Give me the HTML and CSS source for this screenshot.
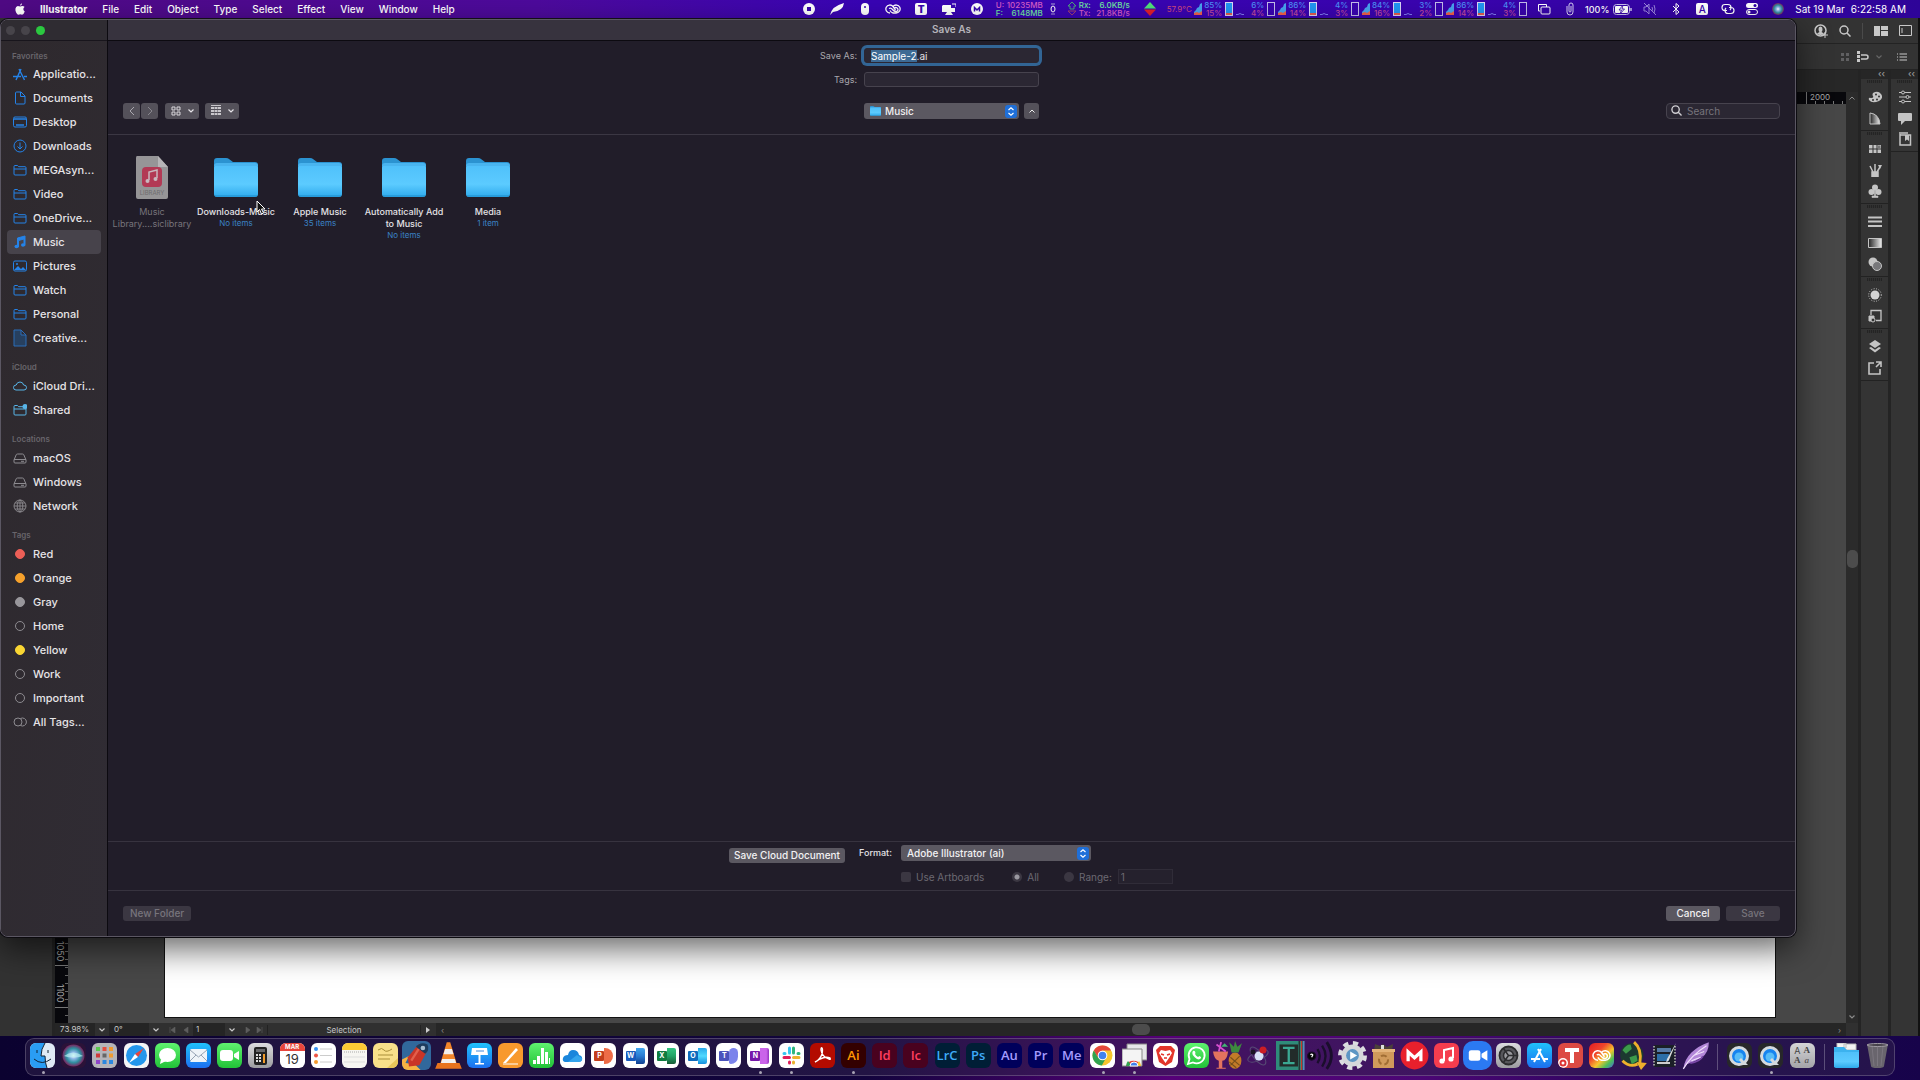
FILE: index.html
```html
<!DOCTYPE html>
<html lang="en">
<head>
    <meta charset="UTF-8">
    <meta name="viewport" content="width=device-width, initial-scale=1.0">
    <title>Save As</title>
    <link rel="stylesheet" href="styles.css">
</head>
<body>
    <!-- Shared icons -->
    <svg class="sprite" aria-hidden="true">
        <linearGradient id="folderBlue" x1="0" y1="0" x2="0" y2="1">
            <stop offset="0" stop-color="#4fc0fa"/><stop offset=".6" stop-color="#5ccbff"/><stop offset="1" stop-color="#2eaaec"/>
        </linearGradient>
        <linearGradient id="fadeGray"><stop offset="0" stop-color="#222"/><stop offset="1" stop-color="#eee"/></linearGradient>
        <linearGradient id="skyBlue" x1="0" y1="0" x2="0" y2="1"><stop offset="0" stop-color="#1fc2fb"/><stop offset="1" stop-color="#1c6ff0"/></linearGradient>
        <linearGradient id="green" x1="0" y1="0" x2="0" y2="1"><stop offset="0" stop-color="#5ff26f"/><stop offset="1" stop-color="#22c238"/></linearGradient>
        <linearGradient id="silver" x1="0" y1="0" x2="0" y2="1"><stop offset="0" stop-color="#dcdcde"/><stop offset="1" stop-color="#9c9ca0"/></linearGradient>
        <linearGradient id="rainbow" x1="0" y1="0" x2="1" y2="1"><stop offset="0" stop-color="#e31b23"/><stop offset=".35" stop-color="#f0452c"/><stop offset=".6" stop-color="#f6c52e"/><stop offset=".8" stop-color="#4abf5a"/><stop offset="1" stop-color="#4b62e0"/></linearGradient>
        <radialGradient id="siri"><stop offset="0" stop-color="#fff"/><stop offset=".3" stop-color="#8fb7e8"/><stop offset=".65" stop-color="#2f8f9f"/><stop offset="1" stop-color="#7a2560"/></radialGradient>
        <symbol id="folder" viewBox="0 0 44 40">
            <path d="M0 6V3q0-3 3-3h9q2 0 3 1l4 3h22q3 0 3 3v4H0z" fill="#2b93d1"/>
            <rect y="7" width="44" height="32" rx="3" fill="url(#folderBlue)"/>
            <path d="M0 8q0-3 3-3h38q3 0 3 3" fill="#49b4ef"/>
            <path d="M1 38h42" stroke="#1f8cc9"/>
        </symbol>
        <symbol id="side-folder" viewBox="0 0 14 14">
            <path d="M1 11V3.500Q1 2.500 2 2.500h2.500l1.200 1.200H12q1 0 1 1V11q0 1-1 1H2q-1 0-1-1zM1 6h12" fill="none" stroke="currentColor"/>
        </symbol>
        <symbol id="drive" viewBox="0 0 14 14">
            <path d="M1 9l2.200-5.200Q3.500 3 4.500 3h5q1 0 1.300.8L13 9v2q0 1-1 1H2q-1 0-1-1zM1 8.500h12M8 10.300h3" fill="none" stroke="currentColor"/>
        </symbol>
        <symbol id="stepper" viewBox="0 0 12 13">
            <rect width="12" height="13" rx="3" fill="#1f6fd8"/>
            <path d="M3.500 5L6 2.800 8.500 5M3.500 8L6 10.200 8.500 8" fill="none" stroke="#fff" stroke-width="1.200"/>
        </symbol>
        <symbol id="chevron" viewBox="0 0 6 4"><path d="M.5.5L3 3 5.500.5" fill="none" stroke="currentColor" stroke-width="1.200"/></symbol>
        <symbol id="magnifier" viewBox="0 0 12 12"><path d="M8 8l3.500 3.500M9 5A4 4 0 1 1 1 5a4 4 0 0 1 8 0z" fill="none" stroke="currentColor" stroke-width="1.500"/></symbol>
        <symbol id="cpu-graph" viewBox="0 0 8 12"><path d="M0 12V9l2-2 1-2 2-1 1-3 2-1v12z" fill="#48a3ef"/><path d="M0 12v-2l3-1 2 1 3-2v4z" fill="#f0614b"/></symbol>
        <symbol id="cpu-idle" viewBox="0 0 8 12"><path d="M0 11.500h2l2-1 2 1h2" stroke="#7f7cf0" fill="none"/></symbol>
        <symbol id="bar-full" viewBox="0 0 8 14"><rect x=".5" y=".5" width="7" height="13" fill="#2196f3" stroke="#d9d4f5"/><path d="M1 12h6" stroke="#e45b4e" stroke-width="2"/></symbol>
        <symbol id="bar-empty" viewBox="0 0 8 14"><rect x=".5" y=".5" width="7" height="13" fill="none" stroke="#c3bce8"/></symbol>
        <symbol id="quicktime" viewBox="0 0 25 25">
            <rect width="25" height="25" fill="#27272a"/>
            <circle cx="12" cy="13" r="8.500" fill="#1784ef" stroke="#d5dade" stroke-width="3"/>
            <circle cx="12" cy="14" r="4.500" fill="#58bdf8"/>
            <path d="M14 15l7 7h-5l-4-5z" fill="#d5dade"/>
        </symbol>
        <symbol id="cc" viewBox="0 0 16 12"><path d="M5 10a4 4 0 1 1 3-6.500l2.500 3.500M8 3.500A4 4 0 1 1 11 10H8Q6 9.500 5 7.500M4 5.500q2-1 3.500 1T11 8.500a2 2 0 1 0-1.500-3.400" fill="none" stroke="currentColor" stroke-width="1.300"/></symbol>
    </svg>

    <!-- Menu bar -->
    <header class="menubar">
        <nav class="menus">
            <svg class="apple" viewBox="0 0 12 14"><path d="M8.400 0q.1 2.500-2.300 3Q6 .7 8.400 0zM6.300 4q1.900-1.100 3.900-.3.800.4 1.200 1-1.500 1-1.400 2.700.1 1.800 1.700 2.600Q10.300 14 8.500 14q-1.200-.6-2.200-.6T4.100 14Q2.700 14 1.500 11.500.2 9 .5 6.700.9 4 3.300 3.400q1.400 0 3 .6z" fill="#fff"/></svg>
            <a href="#" class="app-name">Illustrator</a>
            <a href="#">File</a>
            <a href="#">Edit</a>
            <a href="#">Object</a>
            <a href="#">Type</a>
            <a href="#">Select</a>
            <a href="#">Effect</a>
            <a href="#">View</a>
            <a href="#">Window</a>
            <a href="#">Help</a>
        </nav>
        <div class="status">
            <span class="item"><svg width="12" height="12"><circle cx="6" cy="6" r="6" fill="#fff"/><rect x="4" y="4" width="4" height="4" fill="#3a06b0"/></svg></span>
            <span class="item"><svg width="14" height="12"><path d="M0 12Q2 3 14 0q-1 8-11 9z" fill="#fff"/></svg></span>
            <span class="item"><svg width="8" height="12"><rect width="8" height="12" rx="4" fill="#fff"/><path d="M4 3v2" stroke="#3a06b0" stroke-width="1.500"/></svg></span>
            <span class="item"><svg width="16" height="12"><use href="#cc"/></svg></span>
            <span class="item"><b class="letter-badge">T</b></span>
            <span class="item"><svg width="14" height="12"><path d="M1 2h8v3h4v4H9l2 3H3l2-3H0V3z" fill="#fff"/><path d="M10 1h4v3" stroke="#fff" fill="none"/></svg></span>
            <span class="item"><svg width="12" height="12"><circle cx="6" cy="6" r="6" fill="#fff"/><path d="M3.500 8.500v-4L6 7l2.500-2.500v4" fill="none" stroke="#3a06b0" stroke-width="1.500"/></svg></span>
            <span class="item memory">
                <span class="meter pink"><span>U:</span><span>10235MB</span></span>
                <span class="meter lime"><span>F:</span><span>6148MB</span></span>
                <svg class="memory-mark" width="6" height="14"><path d="M1 2h4M1 12h4" stroke="#aaa1d8"/><ellipse cx="3" cy="7" rx="2" ry="3" fill="none" stroke="#fff"/></svg>
            </span>
            <span class="item network">
                <svg class="globe" width="10" height="14"><path d="M5 0l4 4H7v3H3V4H1z" fill="none" stroke="#4aa67a"/><path d="M5 13L1 9h8z" fill="none" stroke="#9d3f70"/></svg>
                <span class="meter lime"><span>Rx:</span><span>6.0KB/s</span></span>
                <span class="meter pink"><span>Tx:</span><span>21.8KB/s</span></span>
            </span>
            <span class="item"><svg width="12" height="14"><path d="M0 6.500L6 0l6 6.500z" fill="#4fe07a"/><path d="M0 7.500h12L6 14z" fill="#e01f2e"/></svg></span>
            <span class="item temp">57.9°C</span>
            <span class="cpu"><svg width="8" height="12"><use href="#cpu-graph"/></svg><span class="load"><span>85%</span><span>15%</span></span><svg width="8" height="14"><use href="#bar-full"/></svg></span>
            <span class="cpu"><svg width="8" height="12"><use href="#cpu-idle"/></svg><span class="load"><span>6%</span><span>4%</span></span><svg width="8" height="14"><use href="#bar-empty"/></svg></span>
            <span class="cpu"><svg width="8" height="12"><use href="#cpu-graph"/></svg><span class="load"><span>86%</span><span>14%</span></span><svg width="8" height="14"><use href="#bar-full"/></svg></span>
            <span class="cpu"><svg width="8" height="12"><use href="#cpu-idle"/></svg><span class="load"><span>4%</span><span>3%</span></span><svg width="8" height="14"><use href="#bar-empty"/></svg></span>
            <span class="cpu"><svg width="8" height="12"><use href="#cpu-graph"/></svg><span class="load"><span>84%</span><span>16%</span></span><svg width="8" height="14"><use href="#bar-full"/></svg></span>
            <span class="cpu"><svg width="8" height="12"><use href="#cpu-idle"/></svg><span class="load"><span>3%</span><span>2%</span></span><svg width="8" height="14"><use href="#bar-empty"/></svg></span>
            <span class="cpu"><svg width="8" height="12"><use href="#cpu-graph"/></svg><span class="load"><span>86%</span><span>14%</span></span><svg width="8" height="14"><use href="#bar-full"/></svg></span>
            <span class="cpu"><svg width="8" height="12"><use href="#cpu-idle"/></svg><span class="load"><span>4%</span><span>3%</span></span><svg width="8" height="14"><use href="#bar-empty"/></svg></span>
            <span class="item"><svg width="14" height="12" fill="none" stroke="#fff"><path d="M3 8H1.500V1.500h8V4"/><rect x="4" y="4" width="9" height="7" rx="1"/></svg></span>
            <span class="item narrow"><svg width="8" height="14" fill="none" stroke="#d8d0f5"><path d="M1 4v6q0 3 3 3t3-3V3q0-2-2-2T3 3v6q0 1 1 1t1-1V4"/></svg></span>
            <span class="item battery">100%
                <svg width="20" height="11"><rect x=".5" y=".5" width="16" height="10" rx="3" fill="none" stroke="#c9bfee"/><rect x="2" y="2" width="13" height="7" rx="1" fill="#fff"/><path d="M10 1L6 6h2.500L7 10l4.500-5H9z" fill="#fff" stroke="#3000a8" stroke-width=".8"/><path d="M18 4v3" stroke="#c9bfee" stroke-width="1.500"/></svg>
            </span>
            <span class="item"><svg width="14" height="12" fill="none" stroke="#9a84dc"><path d="M1 4h2l3-3v10L3 8H1zM9 4q1 2 0 4M11 2q2 4 0 8M1 0l12 12"/></svg></span>
            <span class="item narrow"><svg width="8" height="12" fill="none" stroke="#fff"><path d="M1 3l6 6-3 2.500v-11L7 3 1 9"/></svg></span>
            <span class="item"><b class="letter-badge thin">A</b></span>
            <span class="item narrow"><svg width="14" height="12" fill="none" stroke="#fff" stroke-width="1.200"><path d="M6 7.500H4Q1 7.500 1 4.500T4 1.500h3q3 0 3 3Q10 6 9 7M8 4.500h2q3 0 3 3t-3 3H7q-3 0-3-3Q4 6 5 5"/></svg></span>
            <span class="item narrow"><svg width="12" height="12"><rect y="0" width="12" height="5" rx="2.500" fill="#fff"/><circle cx="9" cy="2.500" r="1.500" fill="#3000a8"/><rect x=".5" y="6.500" width="11" height="5" rx="2.500" fill="none" stroke="#fff"/><circle cx="3" cy="9" r="1.500" fill="#fff"/></svg></span>
            <span class="item"><svg width="12" height="12"><circle cx="6" cy="6" r="6" fill="url(#siri)"/></svg></span>
            <span class="clock"><span>Sat 19 Mar</span><span>6:22:58 AM</span></span>
        </div>
    </header>

    <main class="workspace">
        <!-- Illustrator window behind the sheet -->
        <section class="illustrator">
            <div class="app-bar">
                <svg width="14" height="14"><circle cx="6.500" cy="6.500" r="5.500" fill="none" stroke="#c8c8c8" stroke-width="1.500"/><path d="M4.500 5q0-2.500 2-2.500t2 2.500-1 3l2.500 1.500q-3.500 3-7 0L5.500 8q-1-1-1-3z" fill="#c8c8c8"/><path d="M11 8v6M8 11h6" stroke="#c8c8c8"/></svg>
                <svg width="12" height="12"><use href="#magnifier"/></svg>
                <i class="divider"></i>
                <svg width="14" height="10"><path d="M0 0h6v10H0zM7 0h7v4H7zM7 5h7v5H7z" fill="#c8c8c8"/></svg>
                <svg width="13" height="11"><path d="M.5.5h12v10H.5zM3 3v5" fill="none" stroke="#c8c8c8"/></svg>
            </div>
            <div class="control-bar">
                <svg width="10" height="10"><path d="M1 1h3v3H1zM6 1h3v3H6zM1 6h3v3H1zM6 6h3v3H6z" fill="#606062"/></svg>
                <svg width="12" height="12"><path d="M0 0h3v3H0zM0 4h3v3H0zM0 8h3v3H0z" fill="#c8c8c8"/><path d="M4 4h5q2 0 2 2T9 8H4" fill="none" stroke="#c8c8c8" stroke-width="1.500"/></svg>
                <svg class="dim" width="6" height="4"><use href="#chevron"/></svg>
                <svg class="list-icon" width="10" height="8"><path d="M0 1h1M0 4h1M0 7h1M2.500 1H10M2.500 4H10M2.500 7H10" stroke="#c8c8c8"/></svg>
            </div>
            <div class="app-body">
                <div class="tools"></div>
                <div class="document">
                    <div class="tab-strip"></div>
                    <div class="ruler-row">
                        <div class="ruler-top"><span>2000</span></div>
                        <svg class="scroll-arrow" width="6" height="4"><path d="M.5 3.500L3 1l2.500 2.500" fill="none" stroke="#8a8a8a"/></svg>
                    </div>
                    <div class="canvas-row">
                        <div class="ruler-left"><i></i><span>1100</span><span>1050</span></div>
                        <div class="canvas"><div class="artboard"></div></div>
                        <div class="scroll-y"><i></i><svg width="6" height="4"><use href="#chevron"/></svg></div>
                    </div>
                    <div class="doc-status">
                        <span class="zoom">73.98%</span>
                        <svg class="drop" width="6" height="4"><use href="#chevron"/></svg>
                        <span class="angle">0°</span>
                        <svg class="drop" width="6" height="4"><use href="#chevron"/></svg>
                        <svg class="pager" width="22" height="6"><path d="M1 0v6M15 3l4-3v6zM2 3l4-3v6z" fill="#5e5e5e" stroke="#5e5e5e" stroke-width=".6"/></svg>
                        <span class="page">1</span>
                        <svg class="drop" width="6" height="4"><use href="#chevron"/></svg>
                        <svg class="pager" width="20" height="6"><path d="M5 3L1 0v6zM16 3l-4-3v6zM17 0v6" fill="#5e5e5e" stroke="#5e5e5e" stroke-width=".6"/></svg>
                        <span class="tool-name">Selection</span>
                        <svg class="play" width="5" height="6"><path d="M0 0l4 3-4 3z" fill="#ccc"/></svg>
                        <div class="scroll-x"><span>‹</span><i></i><span>›</span></div>
                    </div>
                </div>
                <div class="panel">
                    <div class="collapse">‹‹</div>
                    <div class="group">
                        <svg viewBox="0 0 14 14"><path d="M5 3q5-3 8 1t-2 7Q4 14 1 10q-1-3 2-2 3 0 2-2-1-1 0-3z" fill="#c4c4c4"/><g fill="#333"><circle cx="8" cy="4.500" r="1"/><circle cx="11" cy="6.500" r="1"/><circle cx="9" cy="9.500" r="1"/><circle cx="5" cy="10" r="1"/></g></svg>
                        <svg viewBox="0 0 14 14"><path d="M2 13V2q9 1 10 11z" fill="url(#fadeGray)" stroke="#c4c4c4"/></svg>
                    </div>
                    <div class="group">
                        <svg viewBox="0 0 14 14"><path d="M1 3h12v8H1z" fill="#c4c4c4"/><path d="M5 3v8M9 3v8M1 7h12" stroke="#333"/><path d="M9.500 3.500h3v3h-3z" fill="#777"/></svg>
                        <svg viewBox="0 0 14 14"><path d="M4 9h6v5H4zM5 9L2 3M7 9V1M9 9l3-5" fill="#c4c4c4" stroke="#c4c4c4" stroke-width="1.500"/><path d="M10 2h4l-2 4z" fill="#c4c4c4"/></svg>
                        <svg viewBox="0 0 14 14" fill="#c4c4c4"><circle cx="7" cy="3.500" r="3"/><circle cx="3.500" cy="8" r="3"/><circle cx="10.500" cy="8" r="3"/><path d="M6.500 6h1v6H10v1.500H4V12h2.500z" stroke="#c4c4c4" stroke-width=".6"/></svg>
                    </div>
                    <div class="group">
                        <svg viewBox="0 0 14 14"><path d="M0 2.500h14M0 6.500h14M0 11h14" stroke="#c4c4c4" stroke-width="2"/></svg>
                        <svg viewBox="0 0 14 14"><path d="M.5 2.500h13v9H.5z" fill="url(#fadeGray)" stroke="#c4c4c4"/></svg>
                        <svg viewBox="0 0 14 14"><circle cx="5" cy="5" r="4.500" fill="#c4c4c4"/><circle cx="9" cy="9" r="4.500" fill="#77777a" stroke="#c4c4c4"/></svg>
                    </div>
                    <div class="group">
                        <svg viewBox="0 0 14 14"><circle cx="7" cy="7" r="4.500" fill="#d4d4d4"/><circle cx="7" cy="7" r="6.300" fill="none" stroke="#c4c4c4" stroke-dasharray="1 1.500"/></svg>
                        <svg viewBox="0 0 14 14" fill="none" stroke="#c4c4c4"><path d="M3 6V1.500h10v10H8" stroke-width="1.300"/><path d="M1 7h5v5H1z" fill="#c4c4c4"/><circle cx="5" cy="11" r="2" fill="#333"/></svg>
                    </div>
                    <div class="group">
                        <svg viewBox="0 0 14 14" fill="#c4c4c4"><path d="M7 0l6 4-6 4-6-4z"/><path d="M1 8l2-1 4 2.800L11 7l2 1-6 4.500z"/></svg>
                        <svg viewBox="0 0 14 14" fill="none" stroke="#c4c4c4" stroke-width="1.600"><path d="M6 2H1v11h11V8M8 1h5v5M13 1L8 6"/></svg>
                    </div>
                </div>
                <div class="panel">
                    <div class="collapse">‹‹</div>
                    <div class="group">
                        <svg viewBox="0 0 14 14" fill="#333" stroke="#c4c4c4"><path d="M1 2.500h12M1 7h12M1 11.500h12"/><circle cx="5" cy="2.500" r="1.500"/><circle cx="9.500" cy="7" r="1.500"/><circle cx="5" cy="11.500" r="1.500"/></svg>
                        <svg viewBox="0 0 14 14"><path d="M1 2h12q1 0 1 1v6q0 1-1 1H7l-4 4v-4H1q-1 0-1-1V3q0-1 1-1z" fill="#c4c4c4"/></svg>
                        <svg viewBox="0 0 14 14"><path d="M1 1h9M2 3h10.500v10H2V2" fill="none" stroke="#c4c4c4" stroke-width="1.500"/><path d="M7 3h4v6L9 7.500 7 9z" fill="#c4c4c4"/></svg>
                    </div>
                </div>
            </div>
        </section>

        <!-- Save sheet -->
        <form class="save-dialog" onsubmit="return false">
            <aside class="sidebar">
                <div class="lights"><i></i><i></i><i class="green"></i></div>
                <nav>
                    <h2>Favorites</h2>
                    <a href="#"><svg viewBox="0 0 14 14" fill="none" stroke="currentColor" stroke-width="1.400"><path d="M3 13L8 2M6 2l5.500 11M0 9.500h8M11 9.500h3"/></svg>Applicatio...</a>
                    <a href="#"><svg viewBox="0 0 14 14" fill="none" stroke="currentColor"><path d="M2.500 12V2q0-1 1-1H8l4 4v7q0 1-1 1H3.500q-1 0-1-1zM7.500 1v4.500H12"/></svg>Documents</a>
                    <a href="#"><svg viewBox="0 0 14 14" fill="none" stroke="currentColor"><rect x=".5" y="2" width="13" height="10" rx="1.500"/><path d="M1 4h12M3 10h8" stroke-width="1.500"/></svg>Desktop</a>
                    <a href="#"><svg viewBox="0 0 14 14" fill="none" stroke="currentColor"><circle cx="7" cy="7" r="6"/><path d="M7 3.500V10M4.500 7.500L7 10l2.500-2.500"/></svg>Downloads</a>
                    <a href="#"><svg><use href="#side-folder"/></svg>MEGAsyn...</a>
                    <a href="#"><svg><use href="#side-folder"/></svg>Video</a>
                    <a href="#"><svg><use href="#side-folder"/></svg>OneDrive...</a>
                    <a href="#" class="selected"><svg viewBox="0 0 14 14" fill="currentColor"><path d="M4.500 3L12 1v9.500h-1V4L5.500 5.500V12h-1z" stroke="currentColor"/><ellipse cx="3.500" cy="11.500" rx="2" ry="1.700"/><ellipse cx="10" cy="10" rx="2" ry="1.700"/></svg>Music</a>
                    <a href="#"><svg viewBox="0 0 14 14"><rect x=".5" y="2" width="13" height="10" rx="1.500" fill="none" stroke="currentColor"/><path d="M1 11l4-4 3 3 2-2 3 3z" fill="currentColor"/><circle cx="4" cy="5" r="1" fill="currentColor"/></svg>Pictures</a>
                    <a href="#"><svg><use href="#side-folder"/></svg>Watch</a>
                    <a href="#"><svg><use href="#side-folder"/></svg>Personal</a>
                    <a href="#"><svg class="tall" viewBox="0 0 14 18" fill="#27405f" stroke="#2a6cb8"><path d="M1 1h7l5 5v11H1zM8 1v5h5"/></svg>Creative...</a>
                    <h2>iCloud</h2>
                    <a href="#" class="cyan"><svg viewBox="0 0 14 14" fill="none" stroke="currentColor"><path d="M3 11Q.5 11 .5 8.500T3.200 6Q4 3 7 3t3.600 3Q13.500 6 13.500 8.500T11 11z"/></svg>iCloud Dri...</a>
                    <a href="#" class="cyan"><svg viewBox="0 0 14 14"><use href="#side-folder"/><circle cx="12" cy="3.500" r="2.500" fill="currentColor"/></svg>Shared</a>
                    <h2>Locations</h2>
                    <a href="#" class="gray"><svg><use href="#drive"/></svg>macOS</a>
                    <a href="#" class="gray"><svg><use href="#drive"/></svg>Windows</a>
                    <a href="#" class="gray"><svg viewBox="0 0 14 14" fill="none" stroke="currentColor" stroke-width=".9"><circle cx="7" cy="7" r="6"/><ellipse cx="7" cy="7" rx="2.800" ry="6"/><path d="M1 7h12M7 1v12M2 4h10M2 10h10"/></svg>Network</a>
                    <h2>Tags</h2>
                    <a href="#"><i class="dot red"></i>Red</a>
                    <a href="#"><i class="dot orange"></i>Orange</a>
                    <a href="#"><i class="dot silver"></i>Gray</a>
                    <a href="#"><i class="dot"></i>Home</a>
                    <a href="#"><i class="dot yellow"></i>Yellow</a>
                    <a href="#"><i class="dot"></i>Work</a>
                    <a href="#"><i class="dot"></i>Important</a>
                    <a href="#" class="gray"><svg viewBox="0 0 14 14" fill="none" stroke="currentColor"><circle cx="5" cy="7" r="4"/><path d="M7.500 3.500a4 4 0 1 1 0 7"/></svg>All Tags...</a>
                </nav>
            </aside>

            <div class="dialog-main">
                <h1>Save As</h1>
                <div class="name-fields">
                    <label for="filename">Save As:</label>
                    <input id="filename" class="focused" type="text" value="Sample-2.ai" spellcheck="false">
                    <label for="tags">Tags:</label>
                    <input id="tags" type="text">
                </div>
                <div class="browser-bar">
                    <div class="view-buttons">
                        <button type="button" class="arrow" aria-label="Back"><svg width="6" height="10" fill="none" stroke="#aaa8af"><path d="M5 1L1 5l4 4"/></svg></button>
                        <button type="button" class="arrow" aria-label="Forward"><svg width="6" height="10" fill="none" stroke="#88868d"><path d="M1 1l4 4-4 4"/></svg></button>
                        <button type="button" class="view" aria-label="Icon view"><svg width="10" height="10" fill="none" stroke="#d8d6da"><path d="M1 1h3v3H1zM6 1h3v3H6zM1 6h3v3H1zM6 6h3v3H6z"/></svg><svg width="6" height="4"><use href="#chevron"/></svg></button>
                        <button type="button" class="view" aria-label="Group by"><svg width="10" height="11" fill="#c8c6ca"><path d="M0 0h10v1H0zM0 2h3v2H0zM3.500 2h3v2h-3zM7 2h3v2H7zM0 5h3v2H0zM3.500 5h3v2h-3zM7 5h3v2H7zM0 8h3v2H0zM3.500 8h3v2h-3zM7 8h3v2H7z"/></svg><svg width="6" height="4"><use href="#chevron"/></svg></button>
                    </div>
                    <div class="location">
                        <div class="select-box">
                            <svg class="select-icon" width="11" height="10"><use href="#folder"/></svg>
                            <select class="with-icon" aria-label="Location"><option>Music</option></select>
                            <svg class="stepper" width="12" height="13"><use href="#stepper"/></svg>
                        </div>
                        <button type="button" class="collapse-button" aria-label="Collapse"><svg width="6" height="4" fill="none" stroke="#eee"><path d="M.5 3.500L3 1l2.500 2.500"/></svg></button>
                    </div>
                    <div class="search">
                        <svg width="11" height="11"><use href="#magnifier"/></svg>
                        <input type="search" placeholder="Search" aria-label="Search">
                    </div>
                </div>

                <div class="files">
                    <figure class="file disabled">
                        <svg width="33" height="43"><path d="M1 0h21l10 11v30q0 2-2 2H2q-2 0-2-2V2q0-2 1-2z" fill="#969597"/><path d="M22 0l10 11H22z" fill="#b6b5b7"/><rect x="6" y="11" width="20" height="20" rx="4" fill="#b23a55"/><path d="M13 24v-8l8-2v8" fill="none" stroke="#c9b8bf" stroke-width="1.500"/><circle cx="11.500" cy="25" r="2" fill="#c9b8bf"/><circle cx="19.500" cy="23" r="2" fill="#c9b8bf"/><text x="16" y="39" class="library-text">LIBRARY</text></svg>
                        <figcaption>Music Library....siclibrary</figcaption>
                    </figure>
                    <figure class="file">
                        <svg width="44" height="40"><use href="#folder"/></svg>
                        <figcaption>Downloads-Music</figcaption><small>No items</small>
                        <svg class="cursor" width="10" height="15"><path d="M1 1v11l2.500-2.500L5.500 14l2-1-2-4H9z" fill="#111" stroke="#fff"/></svg>
                    </figure>
                    <figure class="file">
                        <svg width="44" height="40"><use href="#folder"/></svg>
                        <figcaption>Apple Music</figcaption><small>35 items</small>
                    </figure>
                    <figure class="file">
                        <svg width="44" height="40"><use href="#folder"/></svg>
                        <figcaption>Automatically Add to Music</figcaption><small>No items</small>
                    </figure>
                    <figure class="file">
                        <svg width="44" height="40"><use href="#folder"/></svg>
                        <figcaption>Media</figcaption><small>1 item</small>
                    </figure>
                </div>

                <div class="options">
                    <button type="button" class="push">Save Cloud Document</button>
                    <div class="format">
                        <label for="format">Format:</label>
                        <div class="select-box">
                            <select id="format"><option>Adobe Illustrator (ai)</option></select>
                            <svg class="stepper" width="12" height="13"><use href="#stepper"/></svg>
                        </div>
                        <div class="artboards">
                            <input type="checkbox" id="use-artboards" disabled><label for="use-artboards">Use Artboards</label>
                            <input type="radio" name="which" id="all" checked disabled><label for="all">All</label>
                            <input type="radio" name="which" id="range" disabled><label for="range">Range:</label>
                            <input type="text" class="range-value" value="1" aria-label="Range" disabled>
                        </div>
                    </div>
                </div>
                <div class="actions">
                    <button type="button" class="push new-folder" disabled>New Folder</button>
                    <button type="button" class="push">Cancel</button>
                    <button type="submit" class="push" disabled>Save</button>
                </div>
            </div>
        </form>
    </main>

    <!-- Dock -->
    <footer class="dock">
        <button class="app running" aria-label="Finder"><svg viewBox="0 0 25 25"><rect width="25" height="25" fill="#dfeaf5"/><path d="M0 0h15q-4 6-4 13h4q0 7 2 12H0z" fill="#2a9df4"/><path d="M7 7v3M18 7v3M4 16q8 7 17 0M15 0q-4 6-4 13h4q0 7 2 12" fill="none" stroke="#123"/></svg></button>
        <button class="app" aria-label="Siri"><svg viewBox="0 0 25 25"><rect width="25" height="25" fill="#2b1238"/><circle cx="12.500" cy="12.500" r="11" fill="url(#siri)"/><path d="M3 13q9-7 19 0-10 3-19 0z" fill="#b9f0f0" opacity=".7"/></svg></button>
        <button class="app" aria-label="Launchpad"><svg viewBox="0 0 25 25"><rect width="25" height="25" fill="#b4b4b9"/><path d="M4 4h4v4H4z" fill="#58c84f"/><path d="M10.500 4h4v4h-4z" fill="#e64e41"/><path d="M17 4h4v4h-4zM17 10.500h4v4h-4z" fill="#f09a30"/><path d="M4 10.500h4v4H4z" fill="#ce3a3a"/><path d="M10.500 10.500h4v4h-4z" fill="#666"/><path d="M4 17h4v4H4z" fill="#8c45c9"/><path d="M10.500 17h4v4h-4zM17 17h4v4h-4z" fill="#2a87df"/></svg></button>
        <button class="app" aria-label="Safari"><svg viewBox="0 0 25 25"><rect width="25" height="25" fill="#f4f4f6"/><circle cx="12.500" cy="12.500" r="10.500" fill="#2496ec"/><path d="M20 5l-6 9-3-3z" fill="#e8453c"/><path d="M5 20l6-9 3 3z" fill="#fff"/></svg></button>
        <button class="app" aria-label="Messages"><svg viewBox="0 0 25 25"><rect width="25" height="25" fill="url(#green)"/><ellipse cx="12.500" cy="12" rx="8.500" ry="7" fill="#fff"/><path d="M6 16l-1 5 6-3z" fill="#fff"/></svg></button>
        <button class="app" aria-label="Mail"><svg viewBox="0 0 25 25"><rect width="25" height="25" fill="url(#skyBlue)"/><rect x="4" y="6" width="17" height="13" rx="1.500" fill="#eef3f8"/><path d="M4 7l8.500 7L21 7M4 18l6-6M21 18l-6-6" fill="none" stroke="#96a3b4"/></svg></button>
        <button class="app" aria-label="FaceTime"><svg viewBox="0 0 25 25"><rect width="25" height="25" fill="url(#green)"/><rect x="3" y="7" width="13" height="11" rx="3" fill="#fff"/><path d="M17 11l5-3v9l-5-3z" fill="#fff"/></svg></button>
        <button class="app" aria-label="Calculator"><svg viewBox="0 0 25 25"><rect width="25" height="25" fill="url(#silver)"/><rect x="6" y="4" width="13" height="18" rx="2" fill="#222"/><path d="M8 6h9v3H8z" fill="#68686a"/><path d="M8 11h2v2H8zM11 11h2v2h-2zM8 14h2v2H8zM11 14h2v2h-2zM8 17h2v2H8zM11 17h2v2h-2z" fill="#ddd"/><path d="M15 11h2v9h-2z" fill="#f29b2a"/></svg></button>
        <button class="app calendar" aria-label="Calendar"><span class="tile"><b>MAR</b>19</span></button>
        <button class="app" aria-label="Reminders"><svg viewBox="0 0 25 25"><rect width="25" height="25" fill="#fff"/><circle cx="5" cy="6" r="2" fill="#3793f5"/><circle cx="5" cy="12.500" r="2" fill="#ee5545"/><circle cx="5" cy="19" r="2" fill="#f59a2e"/><path d="M9 6h12M9 12.500h12M9 19h12" stroke="#ccc"/></svg></button>
        <button class="app" aria-label="Notes"><svg viewBox="0 0 25 25"><rect width="25" height="25" fill="#f7f6f2"/><path d="M0 0h25v7H0z" fill="#fcc935"/><path d="M2 9h21" stroke="#aaa" stroke-dasharray="1 1"/><path d="M2 14h21M2 19h21" stroke="#ddd"/></svg></button>
        <button class="app" aria-label="Stickies"><svg viewBox="0 0 25 25"><rect width="25" height="25" fill="#f9e08a"/><path d="M5 7q4-3 6 0t8-1M5 12h15M5 16h12" fill="none" stroke="#a98f3a"/><path d="M14 25l11-10v10z" fill="#e7c659"/></svg></button>
        <button class="app big" aria-label="Rocket"><svg viewBox="0 0 25 25"><rect width="25" height="25" fill="#31689c"/><path d="M0 16l6-3-3 6 8 1 5 5H0z" fill="#f6b343"/><path d="M5 14L14 3l8 5-7 13-9 1z" fill="#c93527"/><path d="M8 17l7-11" stroke="#e2604c" stroke-width="2"/><path d="M12 5q4-5 10-2 2 5-2 8z" fill="#1d3c5d"/><circle cx="18" cy="6" r="2" fill="#a9bfd1"/></svg></button>
        <button class="app big" aria-label="VLC"><svg class="free" viewBox="0 0 25 25"><path d="M11 1h3l6 20H5z" fill="#f2862a"/><path d="M9.500 7h6l1.300 4.500H8.200zM7 15.500h11l1 3.500H6z" fill="#f2f0ee"/><path d="M3 19h19l2 5H1z" fill="#e9731c"/></svg></button>
        <button class="app" aria-label="Keynote"><svg viewBox="0 0 25 25"><rect width="25" height="25" fill="url(#skyBlue)"/><path d="M5 5h15l1 7H4zM11.500 12h2v8h-2zM8 20h9v1.500H8z" fill="#fff"/><path d="M9 8h8" stroke="#3c89dd"/></svg></button>
        <button class="app" aria-label="Pages"><svg viewBox="0 0 25 25"><rect width="25" height="25" fill="#f8992d"/><path d="M5 20L18 5l2 2L8 20z" fill="#fff"/><path d="M5 21h15" stroke="#fff"/></svg></button>
        <button class="app" aria-label="Numbers"><svg viewBox="0 0 25 25"><rect width="25" height="25" fill="url(#green)"/><path d="M4 17h3v4H4zM8 13h3v8H8zM12 5h3v16h-3zM16 9h3v12h-3zM20 15h1v6h-1z" fill="#fff"/></svg></button>
        <button class="app" aria-label="OneDrive"><svg viewBox="0 0 25 25"><rect width="25" height="25" fill="#fff"/><path d="M5 19q-3-1-2-4t5-3q1-5 5-5 5 0 6 5 4 1 3 5-1 2-4 2z" fill="#1a86dc"/><path d="M8 19l9-7 5 3q1 4-4 4z" fill="#34a5ed"/></svg></button>
        <button class="app office ppt" aria-label="PowerPoint"><span class="tile"><i></i><b>P</b></span></button>
        <button class="app office word" aria-label="Word"><span class="tile"><i></i><b>W</b></span></button>
        <button class="app office excel" aria-label="Excel"><span class="tile"><i></i><b>X</b></span></button>
        <button class="app office outlook" aria-label="Outlook"><span class="tile"><i></i><b>O</b></span></button>
        <button class="app office teams" aria-label="Teams"><span class="tile"><i></i><b>T</b></span></button>
        <button class="app office onenote running" aria-label="OneNote"><span class="tile"><i></i><b>N</b></span></button>
        <button class="app running" aria-label="Slack"><svg viewBox="0 0 25 25" fill="none" stroke-width="3" stroke-linecap="round"><rect width="25" height="25" fill="#fff"/><path d="M10.500 5v5M5 10.500h1" stroke="#36c5f0"/><path d="M14.500 5v5M20 10.500h-1" stroke="#2eb67d"/><path d="M14.500 14.500H20M14.500 20v-1" stroke="#ecb22e"/><path d="M5 14.500h5.500M10.500 20v-1" stroke="#e01e5a"/></svg></button>
        <button class="app" aria-label="Acrobat"><svg viewBox="0 0 25 25"><rect width="25" height="25" fill="#b30b00"/><path d="M5 19q5-2 7-8 1-5 0-6t-1 2q1 7 8 9 2 1 1-1-4-2-10 1-5 3-5 3z" fill="none" stroke="#fff" stroke-width="1.400"/></svg></button>
        <button class="app adobe ai running"><span class="tile">Ai</span></button>
        <button class="app adobe id"><span class="tile">Id</span></button>
        <button class="app adobe id"><span class="tile">Ic</span></button>
        <button class="app adobe ps"><span class="tile">LrC</span></button>
        <button class="app adobe ps"><span class="tile">Ps</span></button>
        <button class="app adobe pr"><span class="tile">Au</span></button>
        <button class="app adobe pr"><span class="tile">Pr</span></button>
        <button class="app adobe pr"><span class="tile">Me</span></button>
        <button class="app running" aria-label="Chrome"><svg viewBox="0 0 25 25"><rect width="25" height="25" fill="#fff"/><circle cx="12.500" cy="12.500" r="10" fill="#f7c52d"/><path d="M3.800 7.500a10 10 0 0 1 17.400 0H12l-4 7z" fill="#e5483b"/><path d="M3.800 7.500a10 10 0 0 0 8 15l4.200-7.500-8-.5z" fill="#31a350"/><circle cx="12.500" cy="12.500" r="4.800" fill="#fff"/><circle cx="12.500" cy="12.500" r="3.800" fill="#3f82ee"/></svg></button>
        <button class="app running" aria-label="Chrome windows"><svg class="free" viewBox="0 0 25 25"><path d="M5 1h20v16H5z" fill="#e6e6e8" stroke="#888"/><path d="M0 6h20v17H0z" fill="#f4f4f4" stroke="#888"/><path d="M4 23a8 8 0 0 1 15 0z" fill="#e5483b"/><path d="M4 23a8 8 0 0 1 2-5l4 5z" fill="#31a350"/><path d="M14 23l3-5a8 8 0 0 1 2 5z" fill="#f7c52d"/><path d="M8 23a4 4 0 0 1 8 0z" fill="#3f82ee" stroke="#fff"/></svg></button>
        <button class="app" aria-label="Brave"><svg viewBox="0 0 25 25"><rect width="25" height="25" fill="#fff"/><path d="M7 3h11l4 4-3 12-6.500 4L6 19 3 7z" fill="#e3362b"/><path d="M8 7l4.500 1L17 7l2 3-3 5-3.500 5L9 15l-3-5z" fill="#fff"/><path d="M8 11l3 1M17 11l-3 1M11 15h3" stroke="#e3362b" stroke-width="1.500"/></svg></button>
        <button class="app" aria-label="WhatsApp"><svg viewBox="0 0 25 25"><rect width="25" height="25" fill="url(#green)"/><path d="M4 21l1.500-5a8 8 0 1 1 3.500 3.500z" fill="none" stroke="#fff" stroke-width="1.800"/><path d="M9 8q2-1 2.500 2l-.5 1q1 2 3 3l1.500-1q2 1 1.500 2-2 3-6-.500T9 8z" fill="#fff"/></svg></button>
        <button class="app big" aria-label="Cocktail"><svg class="free" viewBox="0 0 25 25"><ellipse cx="19" cy="17" rx="5.500" ry="7" fill="#c27b28"/><path d="M14 1l4 4 1-5 2 5 4-3-3 8h-6z" fill="#3d8a3e"/><path d="M15 14l8 7M14 18l6 5M23 13l-8 8" stroke="#78501c"/><path d="M0 9h13q-1 8-5 8v6h3v1H3v-1h2v-6Q1 16 0 9z" fill="#e2735e"/><path d="M3 3l8 6M7 1l-2 8" stroke="#d84fd0" stroke-width="1.500"/><path d="M7 5h6l-3-3z" fill="#42b573"/></svg></button>
        <button class="app" aria-label="Atom"><svg class="free" viewBox="0 0 25 25"><ellipse cx="12" cy="13" rx="11" ry="4.500" fill="none" stroke="#564a74" transform="rotate(-25 12 13)"/><ellipse cx="12" cy="13" rx="11" ry="4.500" fill="none" stroke="#564a74" transform="rotate(50 12 13)"/><circle cx="13" cy="13" r="4.500" fill="#d9e2f7"/><circle cx="17" cy="7" r="3.500" fill="#cc1e24"/><circle cx="7" cy="9" r="2.500" fill="#1a1424"/></svg></button>
        <button class="app big" aria-label="Editor"><svg class="free" viewBox="0 0 25 25"><path d="M0 0h23v25H0z" fill="#2f8b7a"/><path d="M3 3h16v19H3z" fill="#222b2a"/><path d="M6 6h10M11 6v13M6 19h10" stroke="#3ba892" stroke-width="2"/><path d="M20 0v25" stroke="#222"/><path d="M22 0v25" stroke="#c8382b"/><path d="M24 0v25" stroke="#5fb4da"/></svg></button>
        <button class="app big" aria-label="Sound"><svg class="free" viewBox="0 0 25 25" fill="none" stroke="#1a0e2c"><circle cx="4" cy="13" r="3.500" fill="#07050b"/><path d="M3 12q1-1.500 2 0l-1 2" stroke="#fff"/><path d="M9 7q4 6 0 12M13 4q6 9 0 18" stroke-width="2"/><path d="M17 1q8 12 0 23" stroke-width="2.500"/></svg></button>
        <button class="app big" aria-label="Automation"><svg class="free" viewBox="0 0 25 25"><circle cx="12.500" cy="12.500" r="10.500" fill="none" stroke="#dcdde0" stroke-width="4" stroke-dasharray="4.400 3.850"/><circle cx="12.500" cy="12.500" r="9.500" fill="#d5d7da"/><circle cx="12.500" cy="12.500" r="5.500" fill="#5d96c4"/><path d="M10.500 9l6 3.500-6 3.500z" fill="#fff"/></svg></button>
        <button class="app" aria-label="Bag"><svg class="free" viewBox="0 0 25 25"><path d="M2 7h21v18H2z" fill="#d09a5b"/><path d="M4 1l5 2 3-2 4 3 6-3-1 7H3z" fill="#4a4038"/><path d="M1 6h23v3H1z" fill="#e4b479"/><circle cx="12.500" cy="17" r="4.500" fill="none" stroke="#a06d33" stroke-width="2" stroke-dasharray="6 3"/><path d="M10 2h3v4h-3z" fill="#ddd"/></svg></button>
        <button class="app big" aria-label="MEGA"><svg class="free" viewBox="0 0 25 25"><circle cx="12.500" cy="12.500" r="12" fill="#e8202c"/><path d="M7 17.500v-8l5.500 5 5.500-5v8" fill="none" stroke="#fff" stroke-width="2.800"/></svg></button>
        <button class="app" aria-label="Music"><svg viewBox="0 0 25 25"><rect width="25" height="25" fill="#f53d4e"/><path d="M10 18V7l9-2v10" fill="none" stroke="#fff" stroke-width="2"/><circle cx="8" cy="18" r="2.600" fill="#fff"/><circle cx="17" cy="16" r="2.600" fill="#fff"/></svg></button>
        <button class="app big round" aria-label="Zoom"><svg viewBox="0 0 25 25"><rect width="25" height="25" fill="#2b79f2"/><rect x="5" y="8" width="10" height="9" rx="2" fill="#fff"/><path d="M16 11l5-3v9l-5-3z" fill="#fff"/></svg></button>
        <button class="app" aria-label="System Preferences"><svg viewBox="0 0 25 25"><rect width="25" height="25" fill="url(#silver)"/><circle cx="12.500" cy="12.500" r="9" fill="#57575b" stroke="#2c2c2e" stroke-width="1.800"/><circle cx="12.500" cy="12.500" r="5" fill="#99999d" stroke="#2c2c2e" stroke-width="1.500"/><path d="M12.500 12.500H21M12.500 12.500l-5 7M12.500 12.500l-5-7" stroke="#2c2c2e" stroke-width="1.500"/></svg></button>
        <button class="app" aria-label="App Store"><svg viewBox="0 0 25 25"><rect width="25" height="25" fill="url(#skyBlue)"/><path d="M7 19l7-13M11 6l7 13M4 16h9M17 16h4" stroke="#fff" stroke-width="2"/></svg></button>
        <button class="app" aria-label="Typinator"><svg viewBox="0 0 25 25"><rect width="25" height="25" fill="#dc4a43"/><path d="M7 5h14v4h-5v11h-4V9H7z" fill="#fff"/><circle cx="5" cy="20" r="5" fill="#fff"/><circle cx="5" cy="20" r="2.500" fill="none" stroke="#d33" stroke-width="2"/></svg></button>
        <button class="app" aria-label="Creative Cloud"><svg viewBox="0 0 25 25" color="#fff"><rect width="25" height="25" fill="url(#rainbow)"/><use href="#cc" x="3" y="5" width="19" height="15"/></svg></button>
        <button class="app big" aria-label="JDownloader"><svg class="free" viewBox="0 0 25 25"><circle cx="11" cy="12" r="10" fill="#1c3a30"/><path d="M3 8q3-5 7-5l1 4-5 4zM9 14l6-2 1 5-5 3z" fill="#3c9a4b"/><path d="M13 1q7 6 5 18M3 17q6 6 13 3" fill="none" stroke="#eeb02c" stroke-width="2.500"/><path d="M15 18l9 1-5 6z" fill="#eeb02c"/></svg></button>
        <button class="app" aria-label="Script editor"><svg class="free" viewBox="0 0 25 25"><path d="M2 2h21v22H2z" fill="#1b1f27"/><path d="M2 3v21M23 3v21" stroke="#999" stroke-width="2" stroke-dasharray="1.500 1.500"/><path d="M5 5h14v4H5z" fill="#577ba8"/><path d="M5 11h12v7H5z" fill="#2d6fa8"/><path d="M5 20h13" stroke="#ccc" stroke-width="2"/><path d="M24 0l-7 17-3 3 1-4z" fill="#dcdfe3"/></svg></button>
        <button class="app big" aria-label="Feather"><svg class="free" viewBox="0 0 25 25"><path d="M2 24q1-8 7-14T24 1q0 9-6 13T5 20z" fill="#b287d8"/><path d="M2 24Q9 12 22 4M9 17l8-3M12 12l8-3" fill="none" stroke="#f1e2fb"/><path d="M8 19q8-1 11-6" fill="none" stroke="#7a48a8" stroke-width="1.500"/></svg></button>
        <i class="separator"></i>
        <button class="app" aria-label="QuickTime Player"><svg><use href="#quicktime"/></svg></button>
        <button class="app running" aria-label="QuickTime Player"><svg><use href="#quicktime"/></svg></button>
        <button class="app fonts" aria-label="Font Book"><span class="tile"><b>A</b><b class="serif">A</b><b class="serif">A</b><b class="serif slanted">a</b></span></button>
        <i class="separator"></i>
        <button class="app" aria-label="Documents"><svg class="free" viewBox="0 0 25 25"><path d="M3 0h9v5H3zM10 1h12v6H10z" fill="#f2f2f2" stroke="#bbb"/><path d="M0 4h10l3 3h12v17H0z" fill="#3cb2ee"/><path d="M0 9h25v14q0 2-2 2H2q-2 0-2-2z" fill="url(#folderBlue)"/></svg></button>
        <button class="app" aria-label="Trash"><svg class="free" viewBox="0 0 25 25"><path d="M2 1h21l-4 22q0 2-6.500 2T6 23z" fill="#69656d"/><path d="M7 3l2 20M12.500 3v20M18 3l-2 20" stroke="#7b767f"/><ellipse cx="12.500" cy="2" rx="10.500" ry="1.500" fill="#454149" stroke="#a29da6"/></svg></button>
    </footer>

    <script>
        // Pre-select the file name without its extension
        const filename = document.getElementById("filename");
        filename.focus();
        filename.setSelectionRange(0, filename.value.lastIndexOf("."));
    </script>
</body>
</html>
```

FILE: styles.css
```css
* {
    margin: 0;
    padding: 0;
    box-sizing: border-box;
}
body {
    display: flex;
    flex-direction: column;
    min-height: 100vh;
    font-family: Inter, "Liberation Sans", sans-serif;
    font-size: 10px;
    color: #e4e2e6;
    background: linear-gradient(90deg, #0b0230 0, #12043c 45%, #560078 61%, #4b0674 74%, #1b0450 92%, #17034a);
    overflow: hidden;
}
svg {
    display: block;
    flex: none;
}
a {
    color: inherit;
    text-decoration: none;
}
button, input, select {
    font: inherit;
    color: inherit;
    border: 0;
    outline: 0;
    appearance: none;
}
.sprite {
    position: absolute;
    width: 0;
    height: 0;
}

/* Menu bar */
.menubar {
    display: flex;
    justify-content: space-between;
    height: 18px;
    color: #fff;
    white-space: nowrap;
    background: linear-gradient(90deg, #4f0a84 0, #4d0a9c 28%, #3804b4 45%, #3a04b0 75%, #2e0498);
}
.menus {
    display: flex;
    align-items: center;
    gap: 15px;
    padding-left: 15px;
    font-weight: 500;
}
.apple {
    width: 10px;
    height: 12px;
}
.app-name {
    font-weight: 700;
}
.status {
    display: flex;
    align-items: center;
    padding-right: 14px;
}
.item {
    display: flex;
    justify-content: center;
    align-items: center;
    width: 28px;
}
.item.narrow {
    width: 24px;
}
.letter-badge {
    width: 12px;
    border-radius: 2px;
    background: #fff;
    color: #3a06b0;
    font-size: 10px;
    font-weight: 900;
    line-height: 12px;
    text-align: center;
}
.letter-badge.thin {
    font-weight: 500;
}
.item.memory {
    display: grid;
    grid-template-columns: 47px 6px;
    column-gap: 7px;
    width: 69px;
}
.memory-mark {
    grid-column: 2;
    grid-row: 1 / 3;
}
.meter {
    display: flex;
    justify-content: space-between;
    font-size: 8px;
    font-weight: 500;
    line-height: 8px;
}
.pink {
    color: #d65cc8;
}
.lime {
    color: #6fe6a0;
}
.item.network {
    display: grid;
    grid-template-columns: 10px 51px;
    column-gap: 2px;
    width: 76px;
}
.globe {
    grid-row: 1 / 3;
}
.item.temp {
    width: 30px;
    color: #d0487e;
    font-size: 8px;
}
.cpu {
    display: flex;
    align-items: center;
    width: 42px;
}
.load {
    width: 20px;
    margin-right: 3px;
    font-size: 8px;
    font-weight: 500;
    line-height: 8px;
    text-align: right;
    color: #4c8ef5;
}
.load span {
    display: block;
}
.load span + span {
    color: #c04a9c;
}
.item.battery {
    width: 54px;
    gap: 4px;
    font-size: 9px;
    font-weight: 500;
}
.clock {
    display: flex;
    gap: 6px;
    padding-left: 3px;
}

/* Illustrator window */
.workspace {
    position: relative;
    display: flex;
    flex: 1;
    margin-bottom: 2px;
}
.illustrator {
    display: flex;
    flex-direction: column;
    flex: 1;
    background: #333;
    border-right: 2px solid #111;
    color: #c8c8c8;
}
.app-bar, .control-bar {
    display: flex;
    align-items: center;
    justify-content: flex-end;
    height: 26px;
    border-bottom: 1px solid #232323;
}
.app-bar {
    gap: 11px;
    padding-right: 6px;
}
.divider {
    width: 1px;
    height: 16px;
    background: #4a4a4a;
}
.control-bar {
    gap: 7px;
    padding-right: 11px;
}
.dim {
    color: #666;
}
.list-icon {
    margin-left: 8px;
}
.app-body {
    display: flex;
    flex: 1;
    gap: 3px;
    background: #242424;
}
.tools {
    width: 52px;
    background: #323232;
}
.document {
    display: flex;
    flex-direction: column;
    flex: 1;
}
.tab-strip {
    height: 22px;
    background: #272727;
}
.ruler-row {
    display: flex;
    align-items: center;
    height: 12px;
    background: #2b2b2b;
}
.ruler-top {
    display: flex;
    justify-content: flex-end;
    flex: 1;
    height: 12px;
    background: #08080c;
}
.ruler-top span {
    width: 40px;
    padding-left: 3px;
    border-left: 1px solid #777;
    color: #aaa;
    font-size: 8px;
    line-height: 10px;
    background: repeating-linear-gradient(90deg, transparent 0 8px, #777 8px 9px) bottom / 100% 3px no-repeat;
}
.scroll-arrow {
    margin: 0 3px;
}
.canvas-row {
    display: flex;
    flex: 1;
}
.ruler-left {
    display: flex;
    flex-direction: column-reverse;
    width: 13px;
    overflow: hidden;
    background: #08080c repeating-linear-gradient(0deg, transparent 0 7px, #666 7px 8px) right / 3px 100% no-repeat;
}
.ruler-left i {
    height: 15px;
}
.ruler-left span {
    height: 42px;
    padding: 0 3px 4px 0;
    border-bottom: 1px solid #777;
    color: #aaa;
    font-size: 9px;
    line-height: 9px;
    text-align: end;
    writing-mode: vertical-rl;
}
.canvas {
    display: flex;
    flex: 1;
    padding: 0 70px 5px 96px;
    background: #474747;
}
.artboard {
    flex: 1;
    background: #fff;
    border: 1px solid #111;
}
.scroll-y {
    display: flex;
    flex-direction: column;
    align-items: center;
    justify-content: space-between;
    width: 12px;
    padding: 446px 0 4px;
    background: #2b2b2b;
    color: #8a8a8a;
}
.scroll-y i {
    width: 11px;
    height: 18px;
    border-radius: 5px;
    background: #4c4c4c;
}
.doc-status {
    display: flex;
    align-items: center;
    height: 13px;
    background: #303030;
    font-size: 8px;
    white-space: nowrap;
}
.zoom, .angle, .page {
    align-self: stretch;
    padding-left: 5px;
    background: #252525;
    line-height: 13px;
}
.zoom {
    width: 40px;
}
.angle {
    width: 40px;
}
.page {
    width: 32px;
    padding-left: 3px;
}
.drop {
    margin: 0 4px;
}
.pager {
    margin: 0 2px 0 6px;
}
.tool-name {
    width: 154px;
    border-left: 1px solid #222;
    border-right: 1px solid #222;
    text-align: center;
}
.play {
    margin: 0 5px;
}
.scroll-x {
    display: flex;
    align-items: center;
    justify-content: space-between;
    flex: 1;
    height: 13px;
    margin-right: 12px;
    padding: 0 5px;
    background: #262626;
    color: #8a8a8a;
}
.scroll-x i {
    width: 18px;
    height: 11px;
    border-radius: 5px;
    background: #4c4c4c;
}
.panel {
    width: 27px;
    background: #343434;
}
.collapse {
    height: 9px;
    padding-right: 3px;
    background: #262626;
    color: #aaa;
    font-size: 9px;
    line-height: 8px;
    text-align: right;
}
.group {
    display: flex;
    flex-direction: column;
    gap: 7px;
    align-items: center;
    padding: 1px 0 5px;
    border-bottom: 1px solid #222;
}
.group:before {
    content: '';
    width: 15px;
    height: 3px;
    background: repeating-linear-gradient(90deg, #242424 0 1px, #303030 1px 2px);
}
.group svg {
    width: 14px;
    height: 14px;
}

/* Save dialog */
.save-dialog {
    position: absolute;
    top: 1px;
    right: 124px;
    bottom: 99px;
    left: 0;
    display: flex;
    overflow: hidden;
    border: 1px solid #5b5763;
    border-radius: 8px;
    background: #211d29;
    box-shadow: 0 12px 32px rgba(0, 0, 0, 0.6), 0 0 0 1px #15131a;
}
.sidebar {
    width: 107px;
    border-right: 1px solid #0c0a10;
    background: linear-gradient(100deg, #2e292d, #302c34);
}
.lights {
    display: flex;
    align-items: center;
    gap: 6px;
    height: 21px;
    padding-left: 5px;
    border-bottom: 1px solid #18151c;
    background: #2f2c32;
}
.lights i {
    width: 9px;
    height: 9px;
    border-radius: 50%;
    background: #47444a;
}
.lights .green {
    background: #2bc840;
}
.sidebar nav {
    padding: 0 6px;
}
.sidebar h2 {
    height: 24px;
    padding: 11px 0 0 5px;
    color: #68656b;
    font-size: 8px;
    font-weight: 600;
    line-height: 12px;
}
.sidebar h2:first-child {
    height: 21px;
    padding-top: 9px;
}
.sidebar a {
    display: flex;
    align-items: center;
    gap: 6px;
    height: 24px;
    padding-left: 6px;
    border-radius: 4px;
    color: #e6e4e7;
    font-size: 11px;
    font-weight: 500;
    white-space: nowrap;
}
.sidebar a svg {
    width: 14px;
    height: 14px;
    color: #2583e8;
}
.sidebar a .tall {
    height: 18px;
}
.sidebar .cyan svg {
    color: #58b5e8;
}
.sidebar .gray svg {
    color: #8d8b90;
}
.sidebar .selected {
    background: #47434b;
}
.dot {
    width: 10px;
    height: 10px;
    margin: 0 2px;
    border: 1px solid #8d8b90;
    border-radius: 50%;
}
.dot.red {
    border-color: #ec5f57;
    background: #ec5f57;
}
.dot.orange {
    border-color: #f6a12c;
    background: #f6a12c;
}
.dot.silver {
    border-color: #98969b;
    background: #98969b;
}
.dot.yellow {
    border-color: #f9d633;
    background: #f9d633;
}
.dialog-main {
    display: flex;
    flex-direction: column;
    flex: 1;
}
.dialog-main h1 {
    height: 21px;
    border-bottom: 1px solid #0c0a10;
    background: #37333e;
    color: #b5b3b9;
    font-size: 10px;
    font-weight: 600;
    line-height: 19px;
    text-align: center;
}
.name-fields {
    display: grid;
    grid-template-columns: 1fr 175px 1fr;
    gap: 9px 7px;
    padding-top: 7px;
    align-items: center;
}
.name-fields label {
    grid-column: 1;
    color: #a9a7ad;
    font-size: 9px;
    text-align: right;
}
.name-fields input {
    grid-column: 2;
    height: 15px;
    padding: 0 6px;
    border: 1px solid #47434e;
    border-radius: 3px;
    background: #2b2733;
}
.name-fields .focused {
    border-color: #2b2733;
    box-shadow: 0 0 0 3px #326595;
}
::selection {
    background: #3d6a94;
    color: #fff;
}
.browser-bar {
    display: grid;
    grid-template-columns: 1fr 175px 1fr;
    gap: 7px;
    align-items: center;
    height: 48px;
    padding: 0 15px;
    border-bottom: 1px solid #3b3743;
}
.view-buttons, .location {
    display: flex;
}
.view-buttons button, .collapse-button {
    display: flex;
    align-items: center;
    justify-content: center;
    height: 16px;
    border-radius: 3px;
    background: #54515a;
}
.view-buttons .arrow {
    width: 17px;
    margin-right: 1px;
}
.view-buttons .view {
    width: 34px;
    gap: 7px;
    margin-left: 6px;
}
.location {
    gap: 5px;
}
.collapse-button {
    width: 15px;
}
.select-box {
    position: relative;
    flex: 1;
}
select {
    display: block;
    width: 100%;
    height: 16px;
    padding: 0 6px;
    border-radius: 3px;
    background: #5b5861;
    color: #f2f1f3;
    font-weight: 500;
    line-height: 16px;
}
select.with-icon {
    padding-left: 21px;
}
.select-icon {
    position: absolute;
    top: 3px;
    left: 6px;
}
.stepper {
    position: absolute;
    top: 2px;
    right: 2px;
}
.search {
    display: flex;
    align-items: center;
    justify-self: end;
    gap: 5px;
    width: 114px;
    height: 16px;
    padding: 0 4px;
    border: 1px solid #47434e;
    border-radius: 4px;
    background: #2b2733;
    color: #d0ced3;
}
.search input {
    width: 80px;
    background: none;
}
.search input::placeholder {
    color: #77747c;
}
.files {
    display: flex;
    flex: 1;
    align-items: flex-start;
    padding: 21px 0 0 2px;
}
.file {
    position: relative;
    display: flex;
    flex-direction: column;
    align-items: center;
    width: 84px;
    padding-top: 2px;
    text-align: center;
}
.file > svg {
    margin-bottom: 8px;
}
.file figcaption {
    width: 82px;
    font-size: 9px;
    font-weight: 500;
    line-height: 12px;
}
.file small {
    color: #3b83c6;
    font-size: 8px;
    line-height: 11px;
}
.file.disabled {
    padding-top: 0;
    color: #77747b;
}
.file.disabled > svg {
    margin-bottom: 7px;
}
.file.disabled figcaption {
    font-weight: 400;
}
.library-text {
    fill: #6d6b6e;
    font-size: 6px;
    text-anchor: middle;
}
.file .cursor {
    position: absolute;
    top: 44px;
    left: 62px;
    margin: 0;
}
.options {
    display: flex;
    justify-content: center;
    gap: 14px;
    height: 50px;
    padding-top: 3px;
    border-top: 1px solid #37333f;
    border-bottom: 1px solid #37333f;
}
.push {
    height: 15px;
    border-radius: 3px;
    background: #5b5861;
    color: #f2f1f3;
    font-weight: 500;
    line-height: 15px;
}
.push:disabled {
    background: #3b3742;
    color: #77747c;
}
.options .push {
    width: 116px;
    margin-top: 3px;
}
.format {
    display: grid;
    grid-template-columns: 35px 190px 76px;
    column-gap: 7px;
    align-content: start;
    row-gap: 8px;
    font-weight: 500;
    font-size: 9px;
}
.format > label {
    line-height: 15px;
}
.format select {
    font-size: 10px;
}
.artboards {
    display: flex;
    align-items: center;
    grid-column: 2 / 4;
    color: #6c6972;
    font-size: 10px;
    font-weight: 400;
}
.artboards label {
    margin: 0 25px 0 5px;
    white-space: nowrap;
}
.artboards [for="use-artboards"] {
    margin-right: 28px;
}
.artboards [for="range"] {
    margin-right: 6px;
}
.artboards [type="checkbox"], .artboards [type="radio"] {
    flex: none;
    width: 10px;
    height: 10px;
    border-radius: 2px;
    background: #3b3742;
}
.artboards [type="radio"] {
    border-radius: 50%;
}
.artboards [type="radio"]:checked {
    background: radial-gradient(circle, #9a98a0 0 2px, #3b3742 3px);
}
.artboards .range-value {
    width: 55px;
    height: 15px;
    padding: 0 2px;
    border: 1px solid #302c38;
    background: #25212d;
}
.actions {
    display: flex;
    gap: 6px;
    height: 45px;
    padding: 15px;
}
.actions .push {
    width: 54px;
}
.actions .new-folder {
    width: 68px;
    margin-right: auto;
}

/* Dock */
.dock {
    display: flex;
    height: 38px;
    margin: 0 25px 4px;
    padding: 0 1px;
    border: 1px solid rgba(255, 255, 255, 0.2);
    border-radius: 9px;
    background: rgba(50, 35, 75, 0.5);
}
.app {
    position: relative;
    display: flex;
    flex: 1;
    justify-content: center;
    padding-top: 4px;
    background: none;
}
.app svg, .tile {
    width: 25px;
    height: 25px;
    border-radius: 6px;
    overflow: hidden;
}
.app .free {
    border-radius: 0;
}
.app.big {
    padding-top: 2px;
}
.app.big svg {
    width: 29px;
    height: 29px;
}
.app.round svg {
    border-radius: 10px;
}
.app.running:after {
    content: '';
    position: absolute;
    bottom: 1px;
    left: calc(50% - 1px);
    width: 3px;
    height: 3px;
    border-radius: 50%;
    background: #a9a3b5;
}
.tile {
    display: block;
    text-align: center;
}
.calendar .tile {
    background: #fff;
    color: #333;
    font-size: 13px;
    line-height: 17px;
}
.calendar b {
    display: block;
    background: #e8463c;
    color: #fff;
    font-size: 6px;
    line-height: 8px;
}
.adobe .tile {
    font-family: "Open Sans", sans-serif;
    font-size: 13px;
    font-weight: 600;
    line-height: 24px;
}
.adobe.ai .tile {
    background: #330000;
    color: #ff9a00;
}
.adobe.id .tile {
    background: #49021f;
    color: #ff3e5e;
}
.adobe.ps .tile {
    background: #001e36;
    color: #3eaaf8;
}
.adobe.pr .tile {
    background: #00005b;
    color: #a59bff;
}
.office .tile {
    display: flex;
    align-items: center;
    padding-left: 3px;
    background: #fff;
}
.office b {
    width: 10px;
    border-radius: 1px;
    color: #fff;
    font-size: 7px;
    line-height: 10px;
}
.office i {
    order: 1;
    width: 9px;
    height: 16px;
    border-radius: 0 2px 2px 0;
}
.ppt b {
    background: #c43e1c;
}
.ppt i {
    border-radius: 0 8px 8px 0;
    background: #ed6c47;
}
.word b {
    background: #185abd;
}
.word i {
    background: linear-gradient(#41a5ee, #2b7cd3 50%, #103f91);
}
.excel b {
    background: #107c41;
}
.excel i {
    background: linear-gradient(#33c481, #21a366 50%, #185c37);
}
.outlook b {
    background: #0f6cbd;
}
.outlook i {
    background: linear-gradient(#28a8ea, #50d9ff 50%, #1490df);
}
.teams b {
    background: #4b53bc;
}
.teams i {
    border-radius: 5px 5px 8px 2px;
    background: #7b83eb;
}
.onenote b {
    background: #7719aa;
}
.onenote i {
    background: linear-gradient(90deg, #ca64ea 70%, #9332bf);
}
.fonts .tile {
    display: grid;
    grid-template-columns: 1fr 1fr;
    padding: 3px;
    background: linear-gradient(#d4d4d6, #a4a4a8);
    color: #444;
    font-size: 9px;
    line-height: 9px;
}
.fonts b {
    font-weight: 400;
}
.fonts .serif {
    font-family: "Liberation Serif", serif;
    font-weight: 700;
}
.fonts .slanted {
    font-style: italic;
    font-weight: 400;
}
.separator {
    width: 1px;
    margin: 5px 6px;
    background: rgba(255, 255, 255, 0.25);
}
```
